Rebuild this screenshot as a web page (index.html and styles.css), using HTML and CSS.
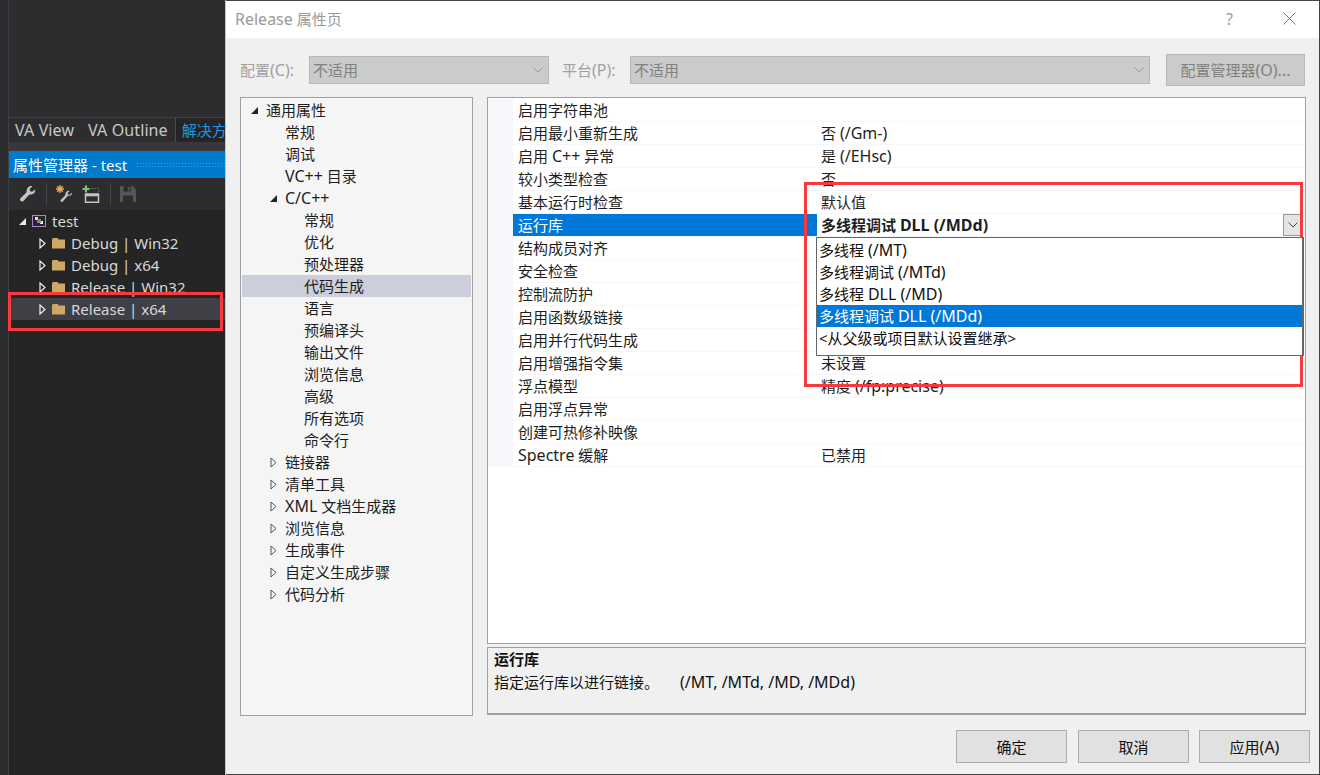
FILE: index.html
```html
<!DOCTYPE html>
<html lang="zh">
<head>
<meta charset="utf-8">
<title>Release 属性页</title>
<link rel="stylesheet" href="styles.css">
</head>
<body>
<div class="ide">
  <aside class="side">
    <div class="side-top"></div>
    <div class="tabs">
      <span class="tab">VA View</span>
      <span class="tab">VA Outline</span>
      <span class="tab active">解决方</span>
    </div>
    <div class="tab-rule"></div>
    <div class="panel-title"><span>属性管理器 - test</span><i class="grip"></i></div>
    <div class="toolbar">
      <svg class="tool wrench" viewBox="0 0 20 20"><path d="M19 5c.6 3-1.700 5.800-5 5.500-1 0-1.600.4-2.200 1L6 17.800c-1.700 2-5.200-1-3.200-3L9 8.500c.6-.6.800-1.100.7-2C9.500 3 13 .3 16 1.300L12.800 4.700l.6 2.300 2.300.6z" fill="#c4c4c4"/></svg>
      <i class="sep"></i>
      <svg class="tool magic" viewBox="0 0 18 18"><path d="M17 7.500c.3 2-1.300 3.600-3.300 3.300-.8 0-1.100.3-1.500.7L7.800 16.600c-1.100 1.200-3-.6-1.900-1.800l4.100-4.400c.4-.4.600-.7.500-1.400C10.300 7 12.600 5.300 14.500 6l-1.900 2 .4 1.400 1.700.4z" fill="#c4c4c4"/><path d="M5 0v8M1 4h8M2.200 1.200l5.600 5.600M7.800 1.200 2.200 6.800" stroke="#e8a860" stroke-width="1.400"/></svg>
      <svg class="tool add" viewBox="0 0 18 18"><path d="M4 .5v7M.5 4h7" stroke="#7ec47e" stroke-width="2.200"/><path d="M3.500 9h13v8.300h-13z" fill="none" stroke="#c4c4c4" stroke-width="1.500"/><path d="M3.500 9h13v2.300h-13z" fill="#c4c4c4"/><path d="M9 3.500h1.500M12 3.500h1.500M15 3.500h1.500M17 5v2" stroke="#777"/></svg>
      <i class="sep"></i>
      <svg class="tool save" viewBox="0 0 16 18"><path d="M0 1h12.500L16 4.500V17H0z" fill="#565658"/><path d="M3.500 1h7.500v5.500H3.500z" fill="#2d2d30"/><path d="M7.800 2h2v3.500h-2z" fill="#565658"/><path d="M3 10.500h10V17H3z" fill="#2d2d30"/></svg>
    </div>
    <ul class="dark-tree">
      <li class="dark-row root"><i class="tri-open light"></i><svg class="proj" viewBox="0 0 14 12"><rect x=".5" y=".5" width="13" height="11" fill="#252526" stroke="#b180d7"/><path d="M3 2h3v3H3zM8 6h3v3H8z" fill="#e8e8e8"/><path d="M5 4h4v4H5z" fill="#888"/></svg><span>test</span></li>
      <li class="dark-row"><svg class="tri" viewBox="0 0 7 11"><path d="M1 1v9l5-4.500z" fill="none" stroke="#f0f0f0" stroke-width="1.200"/></svg><i class="folder"></i><span>Debug | Win32</span></li>
      <li class="dark-row"><svg class="tri" viewBox="0 0 7 11"><path d="M1 1v9l5-4.500z" fill="none" stroke="#f0f0f0" stroke-width="1.200"/></svg><i class="folder"></i><span>Debug | x64</span></li>
      <li class="dark-row"><svg class="tri" viewBox="0 0 7 11"><path d="M1 1v9l5-4.500z" fill="none" stroke="#f0f0f0" stroke-width="1.200"/></svg><i class="folder"></i><span>Release | Win32</span></li>
      <li class="dark-row current"><svg class="tri" viewBox="0 0 7 11"><path d="M1 1v9l5-4.500z" fill="none" stroke="#f0f0f0" stroke-width="1.200"/></svg><i class="folder"></i><span>Release | x64</span></li>
    </ul>
  </aside>

  <main class="dialog">
    <header class="dialog-head">
      <h1><em class="lat">Release</em> 属性页</h1>
      <span class="help">?</span>
      <svg class="close" viewBox="0 0 13 13"><path d="M.5.500l12 12M12.500.500l-12 12" stroke="#777" fill="none"/></svg>
    </header>
    <div class="dialog-body">
      <div class="config">
        <label>配置<em class="lat">(C):</em></label>
        <div class="select first"><span>不适用</span><svg viewBox="0 0 10 6"><path d="M.5.500 5 5l4.500-4.500" fill="none" stroke="#999"/></svg></div>
        <label class="second-label">平台<em class="lat">(P):</em></label>
        <div class="select second"><span>不适用</span><svg viewBox="0 0 10 6"><path d="M.5.500 5 5l4.500-4.500" fill="none" stroke="#999"/></svg></div>
        <div class="manager"><span>配置管理器<em class="lat">(O)...</em></span></div>
      </div>
      <div class="panes">
        <nav class="nav-tree">
          <div class="nav-row l0"><i class="tri-open"></i>通用属性</div>
          <div class="nav-row l1">常规</div>
          <div class="nav-row l1">调试</div>
          <div class="nav-row l1"><em class="lat">VC++</em> 目录</div>
          <div class="nav-row l1 parent"><i class="tri-open"></i><em class="lat">C/C++</em></div>
          <div class="nav-row l2">常规</div>
          <div class="nav-row l2">优化</div>
          <div class="nav-row l2">预处理器</div>
          <div class="nav-row l2 selected">代码生成</div>
          <div class="nav-row l2">语言</div>
          <div class="nav-row l2">预编译头</div>
          <div class="nav-row l2">输出文件</div>
          <div class="nav-row l2">浏览信息</div>
          <div class="nav-row l2">高级</div>
          <div class="nav-row l2">所有选项</div>
          <div class="nav-row l2">命令行</div>
          <div class="nav-row l1 parent closed"><svg class="tri" viewBox="0 0 7 11"><path d="M1 1v9l5-4.500z" fill="none" stroke="#555"/></svg>链接器</div>
          <div class="nav-row l1 parent closed"><svg class="tri" viewBox="0 0 7 11"><path d="M1 1v9l5-4.500z" fill="none" stroke="#555"/></svg>清单工具</div>
          <div class="nav-row l1 parent closed"><svg class="tri" viewBox="0 0 7 11"><path d="M1 1v9l5-4.500z" fill="none" stroke="#555"/></svg><span><em class="lat">XML</em> 文档生成器</span></div>
          <div class="nav-row l1 parent closed"><svg class="tri" viewBox="0 0 7 11"><path d="M1 1v9l5-4.500z" fill="none" stroke="#555"/></svg>浏览信息</div>
          <div class="nav-row l1 parent closed"><svg class="tri" viewBox="0 0 7 11"><path d="M1 1v9l5-4.500z" fill="none" stroke="#555"/></svg>生成事件</div>
          <div class="nav-row l1 parent closed"><svg class="tri" viewBox="0 0 7 11"><path d="M1 1v9l5-4.500z" fill="none" stroke="#555"/></svg>自定义生成步骤</div>
          <div class="nav-row l1 parent closed"><svg class="tri" viewBox="0 0 7 11"><path d="M1 1v9l5-4.500z" fill="none" stroke="#555"/></svg>代码分析</div>
        </nav>
        <section class="right">
          <div class="grid">
            <div class="prop"><span>启用字符串池</span><span></span></div>
            <div class="prop"><span>启用最小重新生成</span><span>否 <em class="lat">(/Gm-)</em></span></div>
            <div class="prop"><span>启用 <em class="lat">C++</em> 异常</span><span>是 <em class="lat">(/EHsc)</em></span></div>
            <div class="prop"><span>较小类型检查</span><span>否</span></div>
            <div class="prop"><span>基本运行时检查</span><span>默认值</span></div>
            <div class="prop active"><span>运行库</span><span>多线程调试 <em class="lat">DLL (/MDd)</em><i class="drop-btn"><svg viewBox="0 0 10 6"><path d="M.5.500 5 5l4.500-4.500" fill="none" stroke="#444"/></svg></i></span></div>
            <div class="prop"><span>结构成员对齐</span><span></span></div>
            <div class="prop"><span>安全检查</span><span></span></div>
            <div class="prop"><span>控制流防护</span><span></span></div>
            <div class="prop"><span>启用函数级链接</span><span></span></div>
            <div class="prop"><span>启用并行代码生成</span><span></span></div>
            <div class="prop"><span>启用增强指令集</span><span>未设置</span></div>
            <div class="prop"><span>浮点模型</span><span>精度 <em class="lat">(/fp:precise)</em></span></div>
            <div class="prop"><span>启用浮点异常</span><span></span></div>
            <div class="prop"><span>创建可热修补映像</span><span></span></div>
            <div class="prop"><span><em class="lat">Spectre</em> 缓解</span><span>已禁用</span></div>
            <ul class="dropdown">
              <li>多线程 <em class="lat">(/MT)</em></li>
              <li>多线程调试 <em class="lat">(/MTd)</em></li>
              <li>多线程 <em class="lat">DLL (/MD)</em></li>
              <li class="chosen">多线程调试 <em class="lat">DLL (/MDd)</em></li>
              <li>&lt;从父级或项目默认设置继承&gt;</li>
            </ul>
          </div>
          <div class="desc">
            <strong>运行库</strong>
            <p>指定运行库以进行链接。<em class="lat desc-flags">(/MT, /MTd, /MD, /MDd)</em></p>
          </div>
        </section>
      </div>
      <footer class="actions">
        <button>确定</button>
        <button>取消</button>
        <button>应用<em class="lat">(A)</em></button>
      </footer>
    </div>
  </main>
</div>
<div class="mark mark-tree"></div>
<div class="mark mark-drop"></div>
</body>
</html>
```
FILE: styles.css
```css
* { box-sizing: border-box; }
html, body { margin: 0; height: 100%; overflow: hidden; }
body {
  font-family: "Noto Sans", "Noto Sans CJK SC", sans-serif;
  font-size: 15px;
  background: #2d2d30;
}
ul { list-style: none; margin: 0; padding: 0; }
i { display: block; font-style: normal; }
em { font-style: normal; }
.lat { font-size: 16px; }

.ide { display: flex; height: 775px; }

/* left dark IDE panel */
.side {
  width: 218px;
  flex: none;
  margin-left: 8px;
  border-left: 1px solid #3f3f46;
  border-right: 1px solid #c4c4c4;
  background: #2d2d30;
  color: #dcdcdc;
  display: flex;
  flex-direction: column;
}
.side-top { height: 117px; }
.tabs { height: 25px; display: flex; background: #252526; }
.tab { line-height: 25px; font-size: 16px; color: #c8c8c8; background: #2d2d30; border-top: 1px solid #3f3f46; flex: none; padding: 0 7px; letter-spacing: .1px; }
.tab:first-child { padding-left: 6px; padding-right: 8px; }
.tab + .tab { padding-left: 6px; padding-right: 7px; }
.tab.active { color: #1c97ea; background: #252526; border-left: 1px solid #4a4a4e; padding-left: 6px; padding-right: 0; font-size: 15px; letter-spacing: 0; white-space: nowrap; flex: 1; min-width: 0; }
.tab-rule { height: 9px; background: #38383b; }
.panel-title {
  height: 27px;
  background: #007acc;
  color: #fff;
  display: flex;
  align-items: center;
  padding-left: 4px;
  font-size: 15px;
  gap: 9px;
}
.grip {
  flex: 1;
  height: 6px;
  background-image: radial-gradient(#3d9ad8 .9px, transparent 1px);
  background-size: 3px 3px;
}
.toolbar { height: 32px; display: flex; align-items: center; padding-left: 9px; }
.tool { flex: none; }
.wrench { width: 18px; height: 18px; }
.magic { width: 18px; height: 18px; margin-left: 8px; }
.add { width: 18px; height: 18px; margin-left: 9px; }
.save { width: 16px; height: 18px; margin-left: 9px; }
.sep { width: 1px; height: 22px; background: #46464a; margin-left: 10px; flex: none; }
.dark-tree { flex: 1; background: #252526; }
.dark-row {
  height: 22px;
  display: flex;
  align-items: center;
  padding-left: 30px;
  color: #d8d8d8;
  white-space: nowrap;
}
.dark-row.root { padding-left: 10px; }
.dark-row.current { background: #3f3f46; }
.proj { width: 14px; height: 12px; margin-left: 6px; margin-right: 6px; flex: none; }
.tri { width: 7px; height: 11px; flex: none; }
.folder {
  width: 13px;
  height: 11px;
  margin-left: 6px;
  margin-right: 6px;
  background: #cfa866;
  clip-path: polygon(0 18%, 8% 0, 42% 0, 50% 18%, 100% 18%, 100% 100%, 0 100%);
  flex: none;
}
.tri-open {
  width: 0;
  height: 0;
  border-style: solid;
  border-width: 0 0 7px 7px;
  border-color: transparent transparent #222 transparent;
  flex: none;
}
.tri-open.light { border-bottom-color: #e8e8e8; }

/* dialog */
.dialog {
  flex: 1;
  min-width: 0;
  background: #f0f0f0;
  border-top: 1px solid #444;
  border-right: 1px solid #444;
  border-bottom: 1px solid #444;
  display: flex;
  flex-direction: column;
}
.dialog-head {
  height: 37px;
  flex: none;
  background: #fff;
  display: flex;
  align-items: center;
  padding: 0 0 2px 9px;
}
.dialog-head h1 { flex: 1; margin: 0; font-size: 15px; font-weight: 400; color: #999; }
.help { color: #999; font-size: 16px; margin-right: 50px; }
.close { width: 13px; height: 13px; margin-right: 23px; }
.dialog-body { flex: 1; display: flex; flex-direction: column; }

.config { height: 59px; display: flex; align-items: center; padding-left: 14px; padding-top: 4px; color: #a0a0a0; }
.config label { width: 69px; flex: none; white-space: nowrap; }
.config .second-label { width: 68px; margin-left: 13px; }
.select {
  height: 28px;
  background: #cbcbcb;
  border: 1px solid #b8b8b8;
  display: flex;
  align-items: center;
  justify-content: space-between;
  padding: 0 5px 0 3px;
  color: #808080;
}
.select svg { width: 10px; height: 6px; }
.select.first { width: 240px; }
.select.second { width: 520px; }
.manager {
  width: 139px;
  height: 32px;
  margin-left: 16px;
  background: #cbcbcb;
  border: 1px solid #b8b8b8;
  color: #808080;
  display: flex;
  align-items: center;
  justify-content: center;
  white-space: nowrap;
}

.panes { display: flex; height: 619px; padding-left: 14px; gap: 14px; }
.nav-tree {
  width: 233px;
  flex: none;
  background: #f5f5f5;
  border: 1px solid #a0a0a0;
  padding: 1px 1px 0;
  color: #1e1e1e;
}
.nav-row { height: 22px; line-height: 22px; display: flex; align-items: center; white-space: pre; }
.nav-row.l0 { padding-left: 9px; gap: 8px; }
.nav-row.l1 { padding-left: 43px; }
.nav-row.l2 { padding-left: 62px; }
.nav-row.parent { padding-left: 28px; gap: 8px; }
.nav-row.selected { background: #cccedb; }

.right { width: 819px; display: flex; flex-direction: column; gap: 3px; }
.grid {
  flex: none;
  height: 547px;
  background: #fff;
  border: 1px solid #a0a0a0;
  padding-top: 1px;
  position: relative;
  color: #1e1e1e;
}
.prop {
  height: 23px;
  display: grid;
  grid-template-columns: 25px 304px 1fr;
  line-height: 22px;
  background: #fff;
  border-bottom: 1px solid #f5f7fb;
}
.prop::before { content: ""; background: #f5f7fb; margin-bottom: -1px; }
.prop > span { padding-left: 4px; white-space: nowrap; position: relative; }
.prop > span:first-of-type { padding-left: 5px; }
.prop.active > span:first-of-type { background: #0078d7; color: #fff; }
.prop.active > span:last-of-type { font-weight: 700; }
.drop-btn {
  position: absolute;
  right: 3px;
  top: 0;
  width: 19px;
  height: 22px;
  background: #e4e4e4;
  border: 1px solid #999;
  display: flex;
  align-items: center;
  justify-content: center;
}
.drop-btn svg { width: 10px; height: 6px; }
.dropdown {
  position: absolute;
  left: 328px;
  top: 139px;
  width: 488px;
  height: 119px;
  background: #fff;
  border: 1px solid #666;
  border-right-width: 2px;
  padding-top: 1px;
  z-index: 2;
  color: #111;
}
.dropdown li { height: 22px; line-height: 22px; padding-left: 2px; }
.dropdown li.chosen { background: #0078d7; color: #fff; }

.desc {
  height: 68px;
  flex: none;
  background: #f0f0f0;
  border: 1px solid #a0a0a0;
  border-bottom-width: 2px;
  padding: 0 6px;
  color: #111;
  line-height: 22px;
}
.desc strong { display: block; }
.desc p { margin: 1px 0 0; white-space: nowrap; }
.desc-flags { margin-left: 21px; }

.actions { flex: 1; display: flex; justify-content: flex-end; gap: 10px; padding: 14px 9px 0 0; }
.actions button {
  width: 111px;
  height: 33px;
  font: inherit;
  color: #111;
  background: #e1e1e1;
  border: 1px solid #adadad;
}
.actions button:nth-child(2) { margin-left: 1px; }

/* red annotation rectangles drawn over the screenshot */
.mark { position: absolute; border: 3px solid #f83a3f; pointer-events: none; }
.mark-tree { left: 8px; top: 292px; width: 215px; height: 39px; }
.mark-drop { left: 804px; top: 182px; width: 499px; height: 205px; }
```
